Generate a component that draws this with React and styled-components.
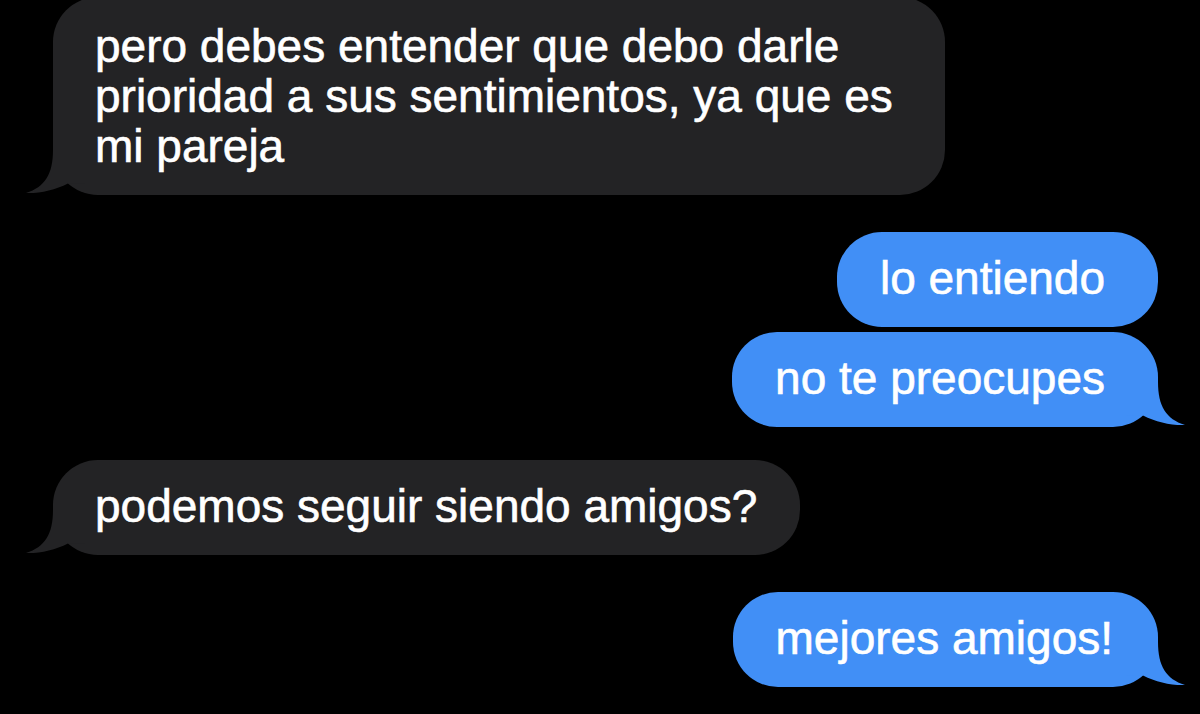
import styled, { createGlobalStyle } from 'styled-components';

const GlobalStyle = createGlobalStyle`
  html, body {
    margin: 0;
    padding: 0;
    background: #000;
    overflow: hidden;
  }
`;

const Thread = styled.div`
  display: flex;
  flex-direction: column;
  width: 1200px;
  height: 714px;
  box-sizing: border-box;
  padding: 0 42px 0 53px;
  background: #000;
  font-family: "Liberation Sans", Arial, sans-serif;
`;

const Bubble = styled.div`
  position: relative;
  align-self: ${props => (props.$sent ? 'flex-end' : 'flex-start')};
  box-sizing: border-box;
  max-width: 892px;
  margin-top: ${props => props.$gap}px;
  padding: 21px ${props => props.$padRight}px 24px ${props => (props.$sent ? 43 : 42)}px;
  border-radius: 45px;
  background: ${props => (props.$sent ? '#418ff6' : '#232325')};
  color: #fff;
  font-size: 46px;
  line-height: 50px;
  -webkit-text-stroke: 0.6px #fff;
  white-space: pre-wrap;

  ${props => props.$wide && `
    width: 892px;
    padding-top: 24px;
  `}
`;

const Tail = styled.svg`
  position: absolute;
  bottom: 0;
  width: 60px;
  height: 45px;
  ${props => (props.$sent
    ? 'right: -27px; transform: scaleX(-1);'
    : 'left: -27px;')}
`;

function BubbleTail({ sent }) {
  return (
    <Tail $sent={sent} viewBox="0 0 60 45">
      <path
        d="M27 0 C27 24 19 37 0 43 C14 43.5 29 40 42 33.5 L60 33 L60 0 Z"
        fill={sent ? '#418ff6' : '#232325'}
      />
    </Tail>
  );
}

const messages = [
  { id: 1, text: 'pero debes entender que debo darle prioridad a sus sentimientos, ya que es mi pareja', gap: -3, tail: true, wide: true, padRight: 43 },
  { id: 2, text: 'lo entiendo', sent: true, gap: 37, padRight: 53 },
  { id: 3, text: 'no te preocupes', sent: true, gap: 5, tail: true, padRight: 53 },
  { id: 4, text: 'podemos seguir siendo amigos?', gap: 33, tail: true, padRight: 43 },
  { id: 5, text: 'mejores amigos!', sent: true, gap: 37, tail: true, padRight: 45 },
];

export default function App() {
  return (
    <>
      <GlobalStyle />
      <Thread>
        {messages.map(m => (
          <Bubble key={m.id} $sent={m.sent} $gap={m.gap} $wide={m.wide} $padRight={m.padRight}>
            {m.text}
            {m.tail && <BubbleTail sent={m.sent} />}
          </Bubble>
        ))}
      </Thread>
    </>
  );
}
